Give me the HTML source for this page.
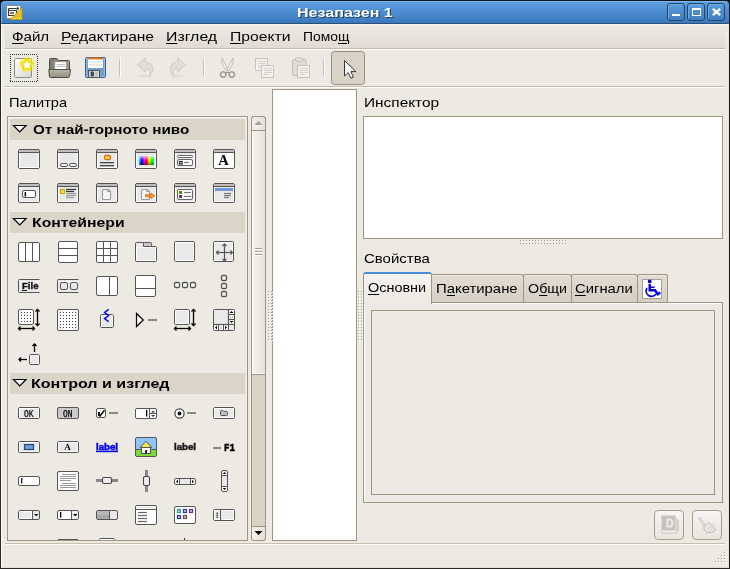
<!DOCTYPE html>
<html><head><meta charset="utf-8">
<style>
*{box-sizing:border-box}
html,body{margin:0;padding:0}
body{width:730px;height:569px;overflow:hidden;position:relative;background:#2B2824;font-family:"Liberation Sans",sans-serif;font-size:13px;color:#000}
.a{position:absolute}
#client{left:1px;top:24px;width:728px;height:544px;background:#EDE9E3;border-left:1px solid #fff;border-top:1px solid #f6f2ee}
.txt{white-space:nowrap;line-height:1;will-change:transform}
.u{text-decoration:underline;text-underline-offset:2px}
.bd{border:1px solid #A0957F}
svg{position:absolute;overflow:visible}
</style></head><body>
<!-- title bar --><div class="a" style="left:0;top:0;width:730px;height:24px;background:#161616"></div>
<div class="a" style="left:1px;top:1px;width:728px;height:23px;border-radius:4px 4px 0 0;background:linear-gradient(#5E9EDE,#3A79BE);border-top:1px solid #7BB5EF;border-left:1px solid #78B2EC;border-bottom:1px solid #2B5078"></div>
<div class="a txt" id="t_title" style="left:296.71px;top:6px;font-size:13.5px;transform:scaleX(1.1885);transform-origin:0 0;font-weight:bold;color:#fff;text-shadow:1px 1px 0 #24466b;">Незапазен 1</div>
<!-- title buttons -->
<div class="a" style="left:667px;top:3px;width:18px;height:18px;border:1px solid #23456C;border-radius:3px;background:linear-gradient(#5E9DDB,#3F7DC0);box-shadow:inset 1px 1px 0 #6FAAE6"></div>
<div class="a" style="left:672px;top:14px;width:8px;height:2px;background:#fff"></div>
<div class="a" style="left:687px;top:3px;width:18px;height:18px;border:1px solid #23456C;border-radius:3px;background:linear-gradient(#5E9DDB,#3F7DC0);box-shadow:inset 1px 1px 0 #6FAAE6"></div>
<div class="a" style="left:692px;top:8px;width:9px;height:8px;border:1px solid #fff;border-top-width:2px"></div>
<div class="a" style="left:707px;top:3px;width:18px;height:18px;border:1px solid #23456C;border-radius:3px;background:linear-gradient(#5E9DDB,#3F7DC0);box-shadow:inset 1px 1px 0 #6FAAE6"></div>
<svg style="left:711px;top:7px" width="11" height="10"><path d="M1.8 1.8L9.2 8.2M9.2 1.8L1.8 8.2" stroke="#fff" stroke-width="2.3"/></svg>

<!-- client -->
<div id="client" class="a"></div>
<!-- menubar -->
<div class="a" style="left:5px;top:25px;width:720px;height:24px;background:linear-gradient(#EDEAE5,#E1DBD3);border-bottom:1px solid #C5B9A7"></div>
<div class="a" style="left:5px;top:49px;width:720px;height:1px;background:#fff"></div>
<div class="a txt" id="t_m1" style="left:12.08px;top:30px;font-size:13.5px;transform:scaleX(1.12);transform-origin:0 0;"><span class="u">Ф</span>айл</div>
<div class="a txt" id="t_m2" style="left:61.05px;top:30px;font-size:13.5px;transform:scaleX(1.1513);transform-origin:0 0;"><span class="u">Р</span>едактиране</div>
<div class="a txt" id="t_m3" style="left:166.12px;top:30px;font-size:13.5px;transform:scaleX(1.1756);transform-origin:0 0;"><span class="u">И</span>зглед</div>
<div class="a txt" id="t_m4" style="left:230.03px;top:30px;font-size:13.5px;transform:scaleX(1.1653);transform-origin:0 0;"><span class="u">П</span>роекти</div>
<div class="a txt" id="t_m5" style="left:302.77px;top:30px;font-size:13.5px;transform:scaleX(1.0279);transform-origin:0 0;">Помо<span class="u">щ</span></div>

<!-- toolbar bottom line -->
<div class="a" style="left:5px;top:86px;width:720px;height:1px;background:#C9BEAE"></div>
<div class="a" style="left:5px;top:87px;width:720px;height:1px;background:#fff"></div>


<!-- palette label -->
<div class="a txt" id="t_pal" style="left:8.52px;top:96px;font-size:13.5px;transform:scaleX(1.0788);transform-origin:0 0;">Палитра</div>
<!-- palette frame -->
<div class="a" style="left:7px;top:116px;width:241px;height:425px;border:1px solid #A0957F;background:#EDE9E3"></div>
<div class="a" style="left:8px;top:117px;width:239px;height:1px;background:#F7F5F2"></div>
<!-- section headers -->
<div class="a" style="left:10px;top:119px;width:235px;height:21px;background:#DAD4C9"></div>
<div class="a" style="left:10px;top:212px;width:235px;height:21px;background:#DAD4C9"></div>
<div class="a" style="left:10px;top:373px;width:235px;height:21px;background:#DAD4C9"></div>
<svg style="left:13px;top:125px" width="14" height="8"><path d="M0.5 0.5H13L6.75 6.8Z" fill="#fff" stroke="#000" stroke-width="1.2"/></svg>
<svg style="left:13px;top:218px" width="14" height="8"><path d="M0.5 0.5H13L6.75 6.8Z" fill="#fff" stroke="#000" stroke-width="1.2"/></svg>
<svg style="left:13px;top:379px" width="14" height="8"><path d="M0.5 0.5H13L6.75 6.8Z" fill="#fff" stroke="#000" stroke-width="1.2"/></svg>
<div class="a txt" id="t_h1" style="left:32.7px;top:123px;font-size:13.5px;transform:scaleX(1.1277);transform-origin:0 0;font-weight:bold;">От най-горното ниво</div>
<div class="a txt" id="t_h2" style="left:31.53px;top:216px;font-size:13.5px;transform:scaleX(1.1688);transform-origin:0 0;font-weight:bold;">Контейнери</div>
<div class="a txt" id="t_h3" style="left:31.31px;top:377px;font-size:13.5px;transform:scaleX(1.1887);transform-origin:0 0;font-weight:bold;">Контрол и изглед</div>

<!-- scrollbar -->
<div class="a" style="left:251px;top:116px;width:15px;height:425px;background:#D9D2C7;border:1px solid #A0957F;border-radius:3px"></div>
<div class="a" style="left:251px;top:116px;width:15px;height:15px;background:linear-gradient(90deg,#F4F1ED,#E6E0D8);border:1px solid #A0957F;border-radius:3px 3px 0 0"></div>
<svg style="left:254px;top:120px" width="9" height="7"><path d="M0.5 5H8.5L4.5 1Z" fill="#A9A08F"/><path d="M1 6H8" stroke="#fff" stroke-width="1"/></svg>
<div class="a" style="left:251px;top:130px;width:15px;height:245px;background:linear-gradient(90deg,#F7F5F2,#E6E1DA);border:1px solid #A0957F;box-shadow:inset 1px -1px 0 #fff"></div>
<div class="a" style="left:255px;top:248px;width:7px;height:1px;background:#A89E8C;box-shadow:0 1px 0 #fff,0 3px 0 #A89E8C,0 4px 0 #fff,0 6px 0 #A89E8C,0 7px 0 #fff"></div>
<div class="a" style="left:251px;top:526px;width:15px;height:15px;background:linear-gradient(90deg,#F4F1ED,#E6E0D8);border:1px solid #A0957F;border-radius:0 0 3px 3px"></div>
<svg style="left:254px;top:530px" width="9" height="7"><path d="M0.5 1H8.5L4.5 5Z" fill="#000"/></svg>

<!-- design white panel -->
<div class="a" style="left:272px;top:89px;width:85px;height:452px;background:#fff;border:1px solid #A0957F"></div>

<!-- inspector -->
<div class="a txt" id="t_insp" style="left:364.36px;top:96px;font-size:13.5px;transform:scaleX(1.1413);transform-origin:0 0;">Инспектор</div>
<div class="a" style="left:363px;top:116px;width:360px;height:123px;background:#fff;border:1px solid #A0957F"></div>

<!-- properties -->
<div class="a txt" id="t_prop" style="left:364.39px;top:252px;font-size:13.5px;transform:scaleX(1.1105);transform-origin:0 0;">Свойства</div>
<!-- notebook -->
<div class="a" style="left:363px;top:302px;width:360px;height:201px;border:1px solid #A0957F;box-shadow:inset 1px 1px 0 #fff"></div>
<div class="a" style="left:371px;top:310px;width:344px;height:185px;border:1px solid #A0957F"></div>
<!-- tabs -->
<div class="a" style="left:432px;top:274px;width:92px;height:28px;background:linear-gradient(#E2DCD3,#D6CFC4);border:1px solid #A0957F;border-bottom:none;border-left:none;border-radius:0 3px 0 0;box-shadow:inset 0 1px 0 #EEE9E3"></div>
<div class="a" style="left:523px;top:274px;width:49px;height:28px;background:linear-gradient(#E2DCD3,#D6CFC4);box-shadow:inset 0 1px 0 #EEE9E3;border:1px solid #A0957F;border-bottom:none;border-radius:3px 3px 0 0"></div>
<div class="a" style="left:571px;top:274px;width:67px;height:28px;background:linear-gradient(#E2DCD3,#D6CFC4);box-shadow:inset 0 1px 0 #EEE9E3;border:1px solid #A0957F;border-bottom:none;border-radius:3px 3px 0 0"></div>
<div class="a" style="left:637px;top:274px;width:31px;height:28px;background:linear-gradient(#E2DCD3,#D6CFC4);box-shadow:inset 0 1px 0 #EEE9E3;border:1px solid #A0957F;border-bottom:none;border-radius:3px 3px 0 0"></div>
<div class="a" style="left:363px;top:272px;width:69px;height:32px;background:linear-gradient(#F6F4F1,#EDE9E3);border:1px solid #A0957F;border-top:2px solid #4A8CD6;border-bottom:none;border-radius:3px 3px 0 0"></div>
<div class="a txt" id="t_tab1" style="left:368.43px;top:281px;font-size:13.5px;transform:scaleX(1.0673);transform-origin:0 0;"><span class="u">О</span>сновни</div>
<div class="a txt" id="t_tab2" style="left:435.9px;top:282px;font-size:13.5px;transform:scaleX(1.1028);transform-origin:0 0;">П<span class="u">а</span>кетиране</div>
<div class="a txt" id="t_tab3" style="left:527.64px;top:282px;font-size:13.5px;transform:scaleX(1.0588);transform-origin:0 0;">О<span class="u">б</span>щи</div>
<div class="a txt" id="t_tab4" style="left:575.0px;top:282px;font-size:13.5px;transform:scaleX(1.098);transform-origin:0 0;"><span class="u">С</span>игнали</div>

<!-- bottom buttons -->
<div class="a" style="left:654px;top:510px;width:30px;height:30px;border:1px solid #A89E8C;border-radius:4px;background:linear-gradient(#F7F5F3,#E8E4DE)"></div>
<div class="a" style="left:692px;top:510px;width:30px;height:30px;border:1px solid #A89E8C;border-radius:4px;background:linear-gradient(#F7F5F3,#E8E4DE)"></div>

<!-- statusbar -->
<div class="a" style="left:5px;top:543px;width:720px;height:1px;background:#C9BEAE"></div>
<div class="a" style="left:5px;top:544px;width:720px;height:1px;background:#fff"></div>
<div class="a" style="left:2px;top:567px;width:726px;height:1px;background:#E6DED3"></div><div class="a" style="left:728px;top:25px;width:1px;height:543px;background:#E6DFD5"></div>
<!--PALETTE--><svg class="a" style="left:0;top:0" width="730" height="569" viewBox="0 0 730 569"><rect x="18.5" y="149.5" width="21" height="19" fill="#E9E9E9" stroke="#555" stroke-width="1" rx="1.5"/><path d="M19.5,153 V167.5 H38.5 V153" fill="none" stroke="#fff" stroke-width="1"/><rect x="19" y="150" width="20" height="2" fill="#BDBDBD"/><line x1="19" y1="152.5" x2="39" y2="152.5" stroke="#555" stroke-width="1"/><rect x="57.5" y="149.5" width="21" height="19" fill="#E9E9E9" stroke="#555" stroke-width="1" rx="1.5"/><path d="M58.5,153 V167.5 H77.5 V153" fill="none" stroke="#fff" stroke-width="1"/><rect x="58" y="150" width="20" height="2" fill="#BDBDBD"/><line x1="58" y1="152.5" x2="78" y2="152.5" stroke="#555" stroke-width="1"/><rect x="60.5" y="163.5" width="7" height="3" fill="#fff" stroke="#555" stroke-width="1" rx="1.5"/><rect x="69.5" y="163.5" width="7" height="3" fill="#fff" stroke="#555" stroke-width="1" rx="1.5"/><rect x="96.5" y="149.5" width="21" height="19" fill="#E9E9E9" stroke="#555" stroke-width="1" rx="1.5"/><path d="M97.5,153 V167.5 H116.5 V153" fill="none" stroke="#fff" stroke-width="1"/><rect x="97" y="150" width="20" height="2" fill="#BDBDBD"/><line x1="97" y1="152.5" x2="117" y2="152.5" stroke="#555" stroke-width="1"/><rect x="104.5" y="155.5" width="6" height="4" fill="#FCE94F" stroke="#E0650A" stroke-width="1.3" rx="1.5"/><rect x="100" y="162" width="14" height="1.3" fill="#444"/><rect x="100" y="165" width="14" height="1.3" fill="#444"/><rect x="135.5" y="149.5" width="21" height="19" fill="#E9E9E9" stroke="#555" stroke-width="1" rx="1.5"/><path d="M136.5,153 V167.5 H155.5 V153" fill="none" stroke="#fff" stroke-width="1"/><rect x="136" y="150" width="20" height="2" fill="#BDBDBD"/><line x1="136" y1="152.5" x2="156" y2="152.5" stroke="#555" stroke-width="1"/><defs><linearGradient id="spec" x1="0" x2="1" y1="0" y2="0"><stop offset="0" stop-color="#0ff"/><stop offset="0.18" stop-color="#00f"/><stop offset="0.38" stop-color="#f0f"/><stop offset="0.52" stop-color="#f00"/><stop offset="0.68" stop-color="#ff0"/><stop offset="0.85" stop-color="#0f0"/><stop offset="1" stop-color="#0f8"/></linearGradient><linearGradient id="specv" x1="0" x2="0" y1="0" y2="1"><stop offset="0" stop-color="#fff" stop-opacity="0.75"/><stop offset="0.45" stop-color="#fff" stop-opacity="0"/><stop offset="0.55" stop-color="#000" stop-opacity="0"/><stop offset="1" stop-color="#000" stop-opacity="0.45"/></linearGradient><linearGradient id="pg" x1="0" y1="0" x2="1" y2="1"><stop offset="0" stop-color="#fff"/><stop offset="1" stop-color="#D0D0D0"/></linearGradient><radialGradient id="glow"><stop offset="0.5" stop-color="#FFF200" stop-opacity="0.9"/><stop offset="1" stop-color="#FFF200" stop-opacity="0"/></radialGradient></defs><rect x="139" y="156" width="15" height="9" fill="url(#spec)"/><rect x="139" y="156" width="15" height="9" fill="url(#specv)"/><rect x="174.5" y="149.5" width="21" height="19" fill="#E9E9E9" stroke="#555" stroke-width="1" rx="1.5"/><path d="M175.5,153 V167.5 H194.5 V153" fill="none" stroke="#fff" stroke-width="1"/><rect x="175" y="150" width="20" height="2" fill="#BDBDBD"/><line x1="175" y1="152.5" x2="195" y2="152.5" stroke="#555" stroke-width="1"/><rect x="177.5" y="155.5" width="15" height="2" fill="#fff" stroke="#666" stroke-width="1" rx="1"/><rect x="177.5" y="159.5" width="15" height="6" fill="#fff" stroke="#666" stroke-width="1" rx="1.5"/><rect x="179.5" y="161.5" width="2.5" height="2.5" fill="none" stroke="#333" stroke-width="1.3"/><line x1="184" y1="162.5" x2="189" y2="162.5" stroke="#777" stroke-width="1.2"/><rect x="213.5" y="149.5" width="21" height="19" fill="#fff" stroke="#555" stroke-width="1" rx="1.5"/><rect x="214" y="150" width="20" height="2" fill="#BDBDBD"/><line x1="214" y1="152.5" x2="234" y2="152.5" stroke="#555" stroke-width="1"/><text x="223.5" y="165" font-family="Liberation Serif" font-weight="bold" font-size="14.5" text-anchor="middle" fill="#000">A</text><rect x="18.5" y="183.5" width="21" height="19" fill="#E9E9E9" stroke="#555" stroke-width="1" rx="1.5"/><path d="M19.5,187 V201.5 H38.5 V187" fill="none" stroke="#fff" stroke-width="1"/><rect x="19" y="184" width="20" height="2" fill="#BDBDBD"/><line x1="19" y1="186.5" x2="39" y2="186.5" stroke="#555" stroke-width="1"/><rect x="22.5" y="190.5" width="13" height="7" fill="#fff" stroke="#555" stroke-width="1" rx="1.5"/><rect x="24.6" y="192" width="1.5" height="4.5" fill="#000"/><rect x="57.5" y="183.5" width="21" height="19" fill="#E9E9E9" stroke="#555" stroke-width="1" rx="1.5"/><path d="M58.5,187 V201.5 H77.5 V187" fill="none" stroke="#fff" stroke-width="1"/><rect x="58" y="184" width="20" height="2" fill="#BDBDBD"/><line x1="58" y1="186.5" x2="78" y2="186.5" stroke="#555" stroke-width="1"/><rect x="60.5" y="189.5" width="4" height="4" fill="#F3DE3C" stroke="#C4A000" stroke-width="1.2" rx="0.8"/><line x1="66" y1="189.5" x2="76" y2="189.5" stroke="#333" stroke-width="1.2"/><line x1="66" y1="191.5" x2="74" y2="191.5" stroke="#333" stroke-width="1.2"/><line x1="66" y1="193.5" x2="76" y2="193.5" stroke="#999" stroke-width="1.2"/><line x1="66" y1="195.5" x2="76" y2="195.5" stroke="#999" stroke-width="1.2"/><line x1="66" y1="197.5" x2="74" y2="197.5" stroke="#999" stroke-width="1.2"/><rect x="96.5" y="183.5" width="21" height="19" fill="#E9E9E9" stroke="#555" stroke-width="1" rx="1.5"/><path d="M97.5,187 V201.5 H116.5 V187" fill="none" stroke="#fff" stroke-width="1"/><rect x="97" y="184" width="20" height="2" fill="#BDBDBD"/><line x1="97" y1="186.5" x2="117" y2="186.5" stroke="#555" stroke-width="1"/><path d="M102.5,190.5 Q102.5,189.5 103.5,189.5 H108.5 L110.5,191.5 V198.5 Q110.5,199.5 109.5,199.5 H103.5 Q102.5,199.5 102.5,198.5 Z" fill="#F6F6F6" stroke="#9a9a9a" stroke-width="1.1"/><path d="M107.5,189.5 V191.5 H110.5" fill="none" stroke="#9a9a9a" stroke-width="0.9"/><rect x="135.5" y="183.5" width="21" height="19" fill="#E9E9E9" stroke="#555" stroke-width="1" rx="1.5"/><path d="M136.5,187 V201.5 H155.5 V187" fill="none" stroke="#fff" stroke-width="1"/><rect x="136" y="184" width="20" height="2" fill="#BDBDBD"/><line x1="136" y1="186.5" x2="156" y2="186.5" stroke="#555" stroke-width="1"/><path d="M141.5,190.5 Q141.5,189.5 142.5,189.5 H147.5 L149.5,191.5 V198.5 Q149.5,199.5 148.5,199.5 H142.5 Q141.5,199.5 141.5,198.5 Z" fill="#F6F6F6" stroke="#9a9a9a" stroke-width="1.1"/><path d="M146.5,189.5 V191.5 H149.5" fill="none" stroke="#9a9a9a" stroke-width="0.9"/><path d="M145.5,194.8 H151 V193.2 L154.8,195.8 L151,198.4 V196.8 H145.5 Z" fill="#F9A845" stroke="#D4650A" stroke-width="0.9"/><rect x="174.5" y="183.5" width="21" height="19" fill="#E9E9E9" stroke="#555" stroke-width="1" rx="1.5"/><path d="M175.5,187 V201.5 H194.5 V187" fill="none" stroke="#fff" stroke-width="1"/><rect x="175" y="184" width="20" height="2" fill="#BDBDBD"/><line x1="175" y1="186.5" x2="195" y2="186.5" stroke="#555" stroke-width="1"/><rect x="177.5" y="189.5" width="15" height="10" fill="#fff" stroke="#666" stroke-width="1" rx="1.5"/><rect x="179" y="191" width="3" height="3" fill="#4E9A06"/><rect x="179" y="195" width="3" height="3" fill="#5C3566"/><line x1="184" y1="192.5" x2="191" y2="192.5" stroke="#777" stroke-width="1.2"/><line x1="184" y1="196.5" x2="191" y2="196.5" stroke="#777" stroke-width="1.2"/><rect x="213.5" y="183.5" width="21" height="19" fill="#E9E9E9" stroke="#555" stroke-width="1" rx="1.5"/><path d="M214.5,187 V201.5 H233.5 V187" fill="none" stroke="#fff" stroke-width="1"/><rect x="214" y="184" width="20" height="2" fill="#BDBDBD"/><line x1="214" y1="186.5" x2="234" y2="186.5" stroke="#555" stroke-width="1"/><rect x="215" y="188" width="18" height="3" fill="#6B9BD2"/><line x1="224" y1="193.5" x2="231" y2="193.5" stroke="#777" stroke-width="1.2"/><line x1="224" y1="195.5" x2="231" y2="195.5" stroke="#777" stroke-width="1.2"/><line x1="224" y1="197.5" x2="229" y2="197.5" stroke="#777" stroke-width="1.2"/><rect x="18.5" y="242.5" width="21" height="19" fill="#fff" stroke="#555" stroke-width="1" rx="1.5"/><line x1="25.5" y1="242.5" x2="25.5" y2="261.5" stroke="#555" stroke-width="1"/><line x1="32.5" y1="242.5" x2="32.5" y2="261.5" stroke="#555" stroke-width="1"/><rect x="58.5" y="241.5" width="19" height="21" fill="#fff" stroke="#555" stroke-width="1" rx="1.5"/><line x1="58.5" y1="248.5" x2="77.5" y2="248.5" stroke="#555" stroke-width="1"/><line x1="58.5" y1="255.5" x2="77.5" y2="255.5" stroke="#555" stroke-width="1"/><rect x="96.5" y="241.5" width="21" height="21" fill="#fff" stroke="#555" stroke-width="1" rx="1.5"/><line x1="103.5" y1="241.5" x2="103.5" y2="262.5" stroke="#555" stroke-width="1"/><line x1="110.5" y1="241.5" x2="110.5" y2="262.5" stroke="#555" stroke-width="1"/><line x1="96.5" y1="248.5" x2="117.5" y2="248.5" stroke="#555" stroke-width="1"/><line x1="96.5" y1="255.5" x2="117.5" y2="255.5" stroke="#555" stroke-width="1"/><path d="M135.5,260.5 V243.5 Q135.5,242.5 136.5,242.5 H143.5 V246.5 H155.5 Q156.5,246.5 156.5,247.5 V260.5 Q156.5,261.5 155.5,261.5 H136.5 Q135.5,261.5 135.5,260.5 Z" fill="#E9E9E9" stroke="#555" stroke-width="1"/><rect x="136.5" y="247.5" width="19" height="13" fill="none" stroke="#fff" stroke-width="1"/><rect x="143.5" y="242.5" width="8" height="4" fill="#C8C8C8" stroke="#555" stroke-width="1" rx="1"/><rect x="174.5" y="241.5" width="20" height="20" fill="#E9E9E9" stroke="#555" stroke-width="1" rx="1.5"/><rect x="175.5" y="242.5" width="18" height="18" fill="none" stroke="#fff" stroke-width="1"/><rect x="213.5" y="241.5" width="20" height="20" fill="#E9E9E9" stroke="#555" stroke-width="1" rx="1.5"/><rect x="214.5" y="242.5" width="18" height="18" fill="none" stroke="#fff" stroke-width="1"/><line x1="216" y1="252.5" x2="232" y2="252.5" stroke="#555" stroke-width="1.2"/><line x1="224.5" y1="244" x2="224.5" y2="260" stroke="#555" stroke-width="1.2"/><path d="M218.5,250.5 L216.5,252.5 L218.5,254.5 M230.5,250.5 L232.5,252.5 L230.5,254.5 M222.5,246 L224.5,244 L226.5,246 M222.5,259 L224.5,261 L226.5,259" fill="none" stroke="#555" stroke-width="1.2"/><path d="M39.5,279.5 H19.5 Q18.5,279.5 18.5,280.5 V291.5 Q18.5,292.5 19.5,292.5 H39.5" fill="#E9E9E9" stroke="#555" stroke-width="1"/><rect x="19" y="281" width="20" height="1" fill="#fff"/><text x="22" y="289" font-family="Liberation Sans" font-weight="bold" font-size="9.5" fill="#111" stroke="#111" stroke-width="0.35" textLength="16.5" lengthAdjust="spacingAndGlyphs">File</text><line x1="22" y1="290.5" x2="27" y2="290.5" stroke="#111" stroke-width="1"/><path d="M78.5,279.5 H58.5 Q57.5,279.5 57.5,280.5 V291.5 Q57.5,292.5 58.5,292.5 H78.5" fill="#E9E9E9" stroke="#555" stroke-width="1"/><rect x="58" y="281" width="20" height="1" fill="#fff"/><rect x="60.5" y="282.5" width="7" height="7" fill="#E9E9E9" stroke="#555" stroke-width="1" rx="1.5"/><rect x="70.5" y="282.5" width="7" height="7" fill="#E9E9E9" stroke="#555" stroke-width="1" rx="1.5"/><rect x="96.5" y="276.5" width="21" height="19" fill="#fff" stroke="#555" stroke-width="1" rx="1.5"/><line x1="109.5" y1="276.5" x2="109.5" y2="295.5" stroke="#555" stroke-width="1"/><rect x="135.5" y="275.5" width="20" height="21" fill="#fff" stroke="#555" stroke-width="1" rx="1.5"/><line x1="135.5" y1="288.5" x2="155.5" y2="288.5" stroke="#555" stroke-width="1"/><rect x="174.5" y="282.5" width="5" height="5" fill="#fff" stroke="#555" stroke-width="1.3" rx="1.3"/><rect x="182.5" y="282.5" width="5" height="5" fill="#fff" stroke="#555" stroke-width="1.3" rx="1.3"/><rect x="190.5" y="282.5" width="5" height="5" fill="#fff" stroke="#555" stroke-width="1.3" rx="1.3"/><rect x="221.5" y="275.5" width="5" height="5" fill="#fff" stroke="#555" stroke-width="1.3" rx="1.3"/><rect x="221.5" y="283.5" width="5" height="5" fill="#fff" stroke="#555" stroke-width="1.3" rx="1.3"/><rect x="221.5" y="291.5" width="5" height="5" fill="#fff" stroke="#555" stroke-width="1.3" rx="1.3"/><rect x="18.5" y="309.5" width="15" height="15" fill="#fff" stroke="#555" stroke-width="1" rx="1.5"/><rect x="21" y="312" width="1" height="1" fill="#444"/><rect x="21" y="315" width="1" height="1" fill="#444"/><rect x="21" y="318" width="1" height="1" fill="#444"/><rect x="21" y="321" width="1" height="1" fill="#444"/><rect x="24" y="312" width="1" height="1" fill="#444"/><rect x="24" y="315" width="1" height="1" fill="#444"/><rect x="24" y="318" width="1" height="1" fill="#444"/><rect x="24" y="321" width="1" height="1" fill="#444"/><rect x="27" y="312" width="1" height="1" fill="#444"/><rect x="27" y="315" width="1" height="1" fill="#444"/><rect x="27" y="318" width="1" height="1" fill="#444"/><rect x="27" y="321" width="1" height="1" fill="#444"/><rect x="30" y="312" width="1" height="1" fill="#444"/><rect x="30" y="315" width="1" height="1" fill="#444"/><rect x="30" y="318" width="1" height="1" fill="#444"/><rect x="30" y="321" width="1" height="1" fill="#444"/><line x1="37.5" y1="309.5" x2="37.5" y2="325.5" stroke="#000" stroke-width="1.3"/><path d="M35.5,311.5 L37.5,309.5 L39.5,311.5 M35.5,323.5 L37.5,325.5 L39.5,323.5" fill="none" stroke="#000" stroke-width="1.3"/><line x1="18.5" y1="328.5" x2="34.5" y2="328.5" stroke="#000" stroke-width="1.3"/><path d="M20.5,326.5 L18.5,328.5 L20.5,330.5 M32.5,326.5 L34.5,328.5 L32.5,330.5" fill="none" stroke="#000" stroke-width="1.3"/><rect x="57.5" y="309.5" width="21" height="21" fill="#fff" stroke="#555" stroke-width="1" rx="1.5"/><rect x="60" y="312" width="1" height="1" fill="#444"/><rect x="60" y="315" width="1" height="1" fill="#444"/><rect x="60" y="318" width="1" height="1" fill="#444"/><rect x="60" y="321" width="1" height="1" fill="#444"/><rect x="60" y="324" width="1" height="1" fill="#444"/><rect x="60" y="327" width="1" height="1" fill="#444"/><rect x="63" y="312" width="1" height="1" fill="#444"/><rect x="63" y="315" width="1" height="1" fill="#444"/><rect x="63" y="318" width="1" height="1" fill="#444"/><rect x="63" y="321" width="1" height="1" fill="#444"/><rect x="63" y="324" width="1" height="1" fill="#444"/><rect x="63" y="327" width="1" height="1" fill="#444"/><rect x="66" y="312" width="1" height="1" fill="#444"/><rect x="66" y="315" width="1" height="1" fill="#444"/><rect x="66" y="318" width="1" height="1" fill="#444"/><rect x="66" y="321" width="1" height="1" fill="#444"/><rect x="66" y="324" width="1" height="1" fill="#444"/><rect x="66" y="327" width="1" height="1" fill="#444"/><rect x="69" y="312" width="1" height="1" fill="#444"/><rect x="69" y="315" width="1" height="1" fill="#444"/><rect x="69" y="318" width="1" height="1" fill="#444"/><rect x="69" y="321" width="1" height="1" fill="#444"/><rect x="69" y="324" width="1" height="1" fill="#444"/><rect x="69" y="327" width="1" height="1" fill="#444"/><rect x="72" y="312" width="1" height="1" fill="#444"/><rect x="72" y="315" width="1" height="1" fill="#444"/><rect x="72" y="318" width="1" height="1" fill="#444"/><rect x="72" y="321" width="1" height="1" fill="#444"/><rect x="72" y="324" width="1" height="1" fill="#444"/><rect x="72" y="327" width="1" height="1" fill="#444"/><rect x="75" y="312" width="1" height="1" fill="#444"/><rect x="75" y="315" width="1" height="1" fill="#444"/><rect x="75" y="318" width="1" height="1" fill="#444"/><rect x="75" y="321" width="1" height="1" fill="#444"/><rect x="75" y="324" width="1" height="1" fill="#444"/><rect x="75" y="327" width="1" height="1" fill="#444"/><rect x="100.5" y="314.5" width="13" height="13" fill="#E9E9E9" stroke="#555" stroke-width="1" rx="1.5"/><rect x="101.5" y="315.5" width="11" height="11" fill="none" stroke="#fff" stroke-width="1"/><path d="M108.6,309.3 L104.6,312.5 L108.6,315.5 L104.6,318.5 L108.6,321.7" fill="none" stroke="#0000FF" stroke-width="1.5"/><path d="M136.5,313.5 V326.5 L143.2,320 Z" fill="#fff" stroke="#000" stroke-width="1.2"/><rect x="148" y="319" width="9" height="2" fill="#888"/><rect x="174.5" y="309.5" width="15" height="15" fill="#E9E9E9" stroke="#555" stroke-width="1" rx="1.5"/><rect x="175.5" y="310.5" width="13" height="13" fill="none" stroke="#fff" stroke-width="1"/><line x1="193.5" y1="309.5" x2="193.5" y2="325.5" stroke="#000" stroke-width="1.3"/><path d="M191.5,311.5 L193.5,309.5 L195.5,311.5 M191.5,323.5 L193.5,325.5 L195.5,323.5" fill="none" stroke="#000" stroke-width="1.3"/><line x1="174.5" y1="328.5" x2="190.5" y2="328.5" stroke="#000" stroke-width="1.3"/><path d="M176.5,326.5 L174.5,328.5 L176.5,330.5 M188.5,326.5 L190.5,328.5 L188.5,330.5" fill="none" stroke="#000" stroke-width="1.3"/><rect x="213.5" y="309.5" width="21" height="21" fill="#fff" stroke="#555" stroke-width="1" rx="1"/><rect x="214" y="310" width="14" height="14" fill="#E9E9E9"/><line x1="228.5" y1="309.5" x2="228.5" y2="330.5" stroke="#555" stroke-width="1.2"/><line x1="213.5" y1="324.5" x2="234.5" y2="324.5" stroke="#555" stroke-width="1.2"/><line x1="228.5" y1="314.5" x2="234.5" y2="314.5" stroke="#555" stroke-width="1"/><line x1="228.5" y1="319.5" x2="234.5" y2="319.5" stroke="#555" stroke-width="1"/><line x1="218.5" y1="324.5" x2="218.5" y2="330.5" stroke="#555" stroke-width="1"/><line x1="223.5" y1="324.5" x2="223.5" y2="330.5" stroke="#555" stroke-width="1"/><rect x="229.5" y="315.3" width="4" height="3.6" fill="#E6E6E6"/><rect x="219.5" y="326" width="3" height="3" fill="#E6E6E6"/><path d="M229.5,313 L231.5,311 L233.5,313 Z" fill="#000"/><path d="M229.5,321 L231.5,323 L233.5,321 Z" fill="#000"/><path d="M217,325.5 L215,327.5 L217,329.5 Z M225,325.5 L227,327.5 L225,329.5 Z" fill="#000"/><rect x="229" y="325" width="5" height="5" fill="#E9E9E9"/><rect x="29.5" y="354.5" width="10" height="10" fill="#E9E9E9" stroke="#555" stroke-width="1" rx="1.5"/><rect x="30.5" y="355.5" width="8" height="8" fill="none" stroke="#fff" stroke-width="1"/><line x1="34.5" y1="344" x2="34.5" y2="352" stroke="#000" stroke-width="1.3"/><path d="M32.5,346 L34.5,344 L36.5,346" fill="none" stroke="#000" stroke-width="1.3"/><line x1="19" y1="359.5" x2="27" y2="359.5" stroke="#000" stroke-width="1.3"/><path d="M21,357.5 L19,359.5 L21,361.5" fill="none" stroke="#000" stroke-width="1.3"/><rect x="18.5" y="407.5" width="21" height="11" fill="#E9E9E9" stroke="#555" stroke-width="1" rx="1.5"/><rect x="19.5" y="408.5" width="19" height="9" fill="none" stroke="#fff" stroke-width="1"/><text x="24" y="416.6" font-family="Liberation Mono" font-size="10" fill="#000" stroke="#000" stroke-width="0.25" textLength="9.5" lengthAdjust="spacingAndGlyphs">OK</text><rect x="57.5" y="407.5" width="21" height="11" fill="#CBCBCB" stroke="#555" stroke-width="1" rx="1.5"/><text x="63" y="416.6" font-family="Liberation Mono" font-size="10" fill="#000" stroke="#000" stroke-width="0.25" textLength="9.5" lengthAdjust="spacingAndGlyphs">ON</text><rect x="96.5" y="408.5" width="9" height="9" fill="#fff" stroke="#555" stroke-width="1" rx="1.5"/><path d="M98.4,412.2 L100,416 L104.5,410.3" fill="none" stroke="#111" stroke-width="1.5"/><rect x="98" y="412" width="2" height="4" fill="#111"/><rect x="109" y="412" width="9" height="2" fill="#888"/><rect x="135.5" y="408.5" width="21" height="10" fill="#fff" stroke="#555" stroke-width="1" rx="1.5"/><line x1="149.5" y1="408.5" x2="149.5" y2="418.5" stroke="#555" stroke-width="1"/><line x1="149.5" y1="413.5" x2="156.5" y2="413.5" stroke="#555" stroke-width="1"/><rect x="146" y="410" width="1.3" height="6.5" fill="#000"/><path d="M151,412.5 L153,410.5 L155,412.5 Z M151,415 L153,417 L155,415 Z" fill="#333"/><circle cx="179.5" cy="413.5" r="4.6" fill="#fff" stroke="#444" stroke-width="1.2"/><circle cx="179.5" cy="413.5" r="1.9" fill="#111"/><rect x="187" y="412" width="9" height="2" fill="#888"/><rect x="213.5" y="407.5" width="21" height="11" fill="#E9E9E9" stroke="#555" stroke-width="1" rx="1.5"/><rect x="214.5" y="408.5" width="19" height="9" fill="none" stroke="#fff" stroke-width="1"/><path d="M220.5,411.5 Q220.5,410.5 221.5,410.5 H223 L224,411.5 H226.5 Q227.5,411.5 227.5,412.5 V414.5 Q227.5,415.5 226.5,415.5 H221.5 Q220.5,415.5 220.5,414.5 Z" fill="#BDBDBD" stroke="#555" stroke-width="1"/><rect x="18.5" y="441.5" width="21" height="11" fill="#E9E9E9" stroke="#555" stroke-width="1" rx="1.5"/><rect x="19.5" y="442.5" width="19" height="9" fill="none" stroke="#fff" stroke-width="1"/><rect x="24.5" y="444.5" width="9" height="5" fill="#729FCF" stroke="#204A87" stroke-width="1.2"/><rect x="57.5" y="441.5" width="21" height="11" fill="#E9E9E9" stroke="#555" stroke-width="1" rx="1.5"/><rect x="58.5" y="442.5" width="19" height="9" fill="none" stroke="#fff" stroke-width="1"/><text x="67.5" y="450.3" font-family="Liberation Serif" font-weight="bold" font-size="9" text-anchor="middle" fill="#000">A</text><text x="96" y="450" font-family="Liberation Sans" font-weight="bold" font-size="9.6" fill="#0000EE" stroke="#0000EE" stroke-width="0.5" textLength="22" lengthAdjust="spacingAndGlyphs">label</text><rect x="96" y="450.6" width="22" height="1.6" fill="#0000EE"/><rect x="135.5" y="437.5" width="21" height="19" fill="#8DC4F9" stroke="#555" stroke-width="1" rx="1.5"/><path d="M136,449 H156 V455.5 Q156,456 155.5,456 H136.5 Q136,456 136,455.5 Z" fill="#7BD93A"/><line x1="136" y1="449.5" x2="156" y2="449.5" stroke="#555" stroke-width="1"/><path d="M140.2,447.5 L146,441.3 L151.8,447.5 Z" fill="#FCE94F" stroke="#555" stroke-width="1"/><rect x="141.5" y="447.5" width="9" height="6" fill="#fff" stroke="#555" stroke-width="1"/><rect x="145" y="450" width="2" height="4" fill="#333"/><text x="174" y="450" font-family="Liberation Sans" font-weight="bold" font-size="9.6" fill="#1a1a1a" stroke="#1a1a1a" stroke-width="0.5" textLength="22" lengthAdjust="spacingAndGlyphs">label</text><rect x="213" y="447" width="8" height="2" fill="#888"/><text x="224" y="451" font-family="Liberation Mono" font-weight="bold" font-size="11" fill="#000" stroke="#000" stroke-width="0.5" textLength="11" lengthAdjust="spacingAndGlyphs">F1</text><rect x="18.5" y="476.5" width="21" height="9" fill="#fff" stroke="#555" stroke-width="1" rx="1.5"/><rect x="21" y="478" width="1.3" height="5.5" fill="#1a1a1a"/><rect x="57.5" y="471.5" width="21" height="19" fill="#fff" stroke="#555" stroke-width="1" rx="1.5"/><line x1="62" y1="474.5" x2="76" y2="474.5" stroke="#9a9a9a" stroke-width="1"/><line x1="60" y1="476.5" x2="76" y2="476.5" stroke="#9a9a9a" stroke-width="1"/><line x1="60" y1="478.5" x2="76" y2="478.5" stroke="#9a9a9a" stroke-width="1"/><line x1="60" y1="480.5" x2="71" y2="480.5" stroke="#9a9a9a" stroke-width="1"/><line x1="62" y1="483.5" x2="76" y2="483.5" stroke="#9a9a9a" stroke-width="1"/><line x1="60" y1="485.5" x2="76" y2="485.5" stroke="#9a9a9a" stroke-width="1"/><line x1="60" y1="487.5" x2="76" y2="487.5" stroke="#9a9a9a" stroke-width="1"/><rect x="96" y="479" width="22" height="3" fill="#888"/><rect x="102.5" y="477.5" width="9" height="6" fill="#EEE" stroke="#444" stroke-width="1.1" rx="1.5"/><rect x="145" y="470" width="3" height="22" fill="#888"/><rect x="143.5" y="476.5" width="6" height="9" fill="#EEE" stroke="#444" stroke-width="1.1" rx="1.5"/><rect x="174.5" y="478.5" width="21" height="6" fill="#fff" stroke="#555" stroke-width="1" rx="1.5"/><rect x="180" y="479" width="10" height="5" fill="#E9E9E9"/><line x1="179.5" y1="478.5" x2="179.5" y2="484.5" stroke="#555" stroke-width="1"/><line x1="190.5" y1="478.5" x2="190.5" y2="484.5" stroke="#555" stroke-width="1"/><path d="M178,479.8 L176,481.5 L178,483.2 Z M192,479.8 L194,481.5 L192,483.2 Z" fill="#000"/><rect x="221.5" y="470.5" width="6" height="21" fill="#fff" stroke="#555" stroke-width="1" rx="1.5"/><rect x="222" y="476" width="5" height="10" fill="#E9E9E9"/><line x1="221.5" y1="475.5" x2="227.5" y2="475.5" stroke="#555" stroke-width="1"/><line x1="221.5" y1="486.5" x2="227.5" y2="486.5" stroke="#555" stroke-width="1"/><path d="M222.8,474 L224.5,472 L226.2,474 Z M222.8,488 L224.5,490 L226.2,488 Z" fill="#000"/><rect x="18.5" y="510.5" width="21" height="9" fill="#E9E9E9" stroke="#555" stroke-width="1" rx="1.5"/><rect x="19.5" y="511.5" width="12" height="7" fill="none" stroke="#fff" stroke-width="1"/><line x1="32.5" y1="510.5" x2="32.5" y2="519.5" stroke="#555" stroke-width="1"/><path d="M34,514 H38.5 L36.25,516.3 Z" fill="#000"/><rect x="57.5" y="510.5" width="21" height="9" fill="#fff" stroke="#555" stroke-width="1" rx="1.5"/><line x1="71.5" y1="510.5" x2="71.5" y2="519.5" stroke="#555" stroke-width="1"/><rect x="72" y="511" width="6" height="8" fill="#EDEDED"/><rect x="60" y="512" width="1.3" height="5.5" fill="#000"/><path d="M73,514 H77.5 L75.25,516.3 Z" fill="#000"/><rect x="96.5" y="510.5" width="21" height="9" fill="#E9E9E9" stroke="#555" stroke-width="1" rx="1.5"/><rect x="97" y="511" width="12.5" height="4" fill="#B8B8B8"/><rect x="97" y="515" width="12.5" height="4" fill="#A8A8A8"/><line x1="109.5" y1="510.5" x2="109.5" y2="519.5" stroke="#555" stroke-width="1"/><rect x="135.5" y="505.5" width="21" height="19" fill="#fff" stroke="#555" stroke-width="1" rx="1.5"/><line x1="135.5" y1="509.5" x2="156.5" y2="509.5" stroke="#555" stroke-width="1"/><rect x="137" y="507" width="18" height="1" fill="#E6E6E6"/><line x1="138" y1="512.5" x2="147" y2="512.5" stroke="#666" stroke-width="1.2"/><line x1="138" y1="515.5" x2="147" y2="515.5" stroke="#666" stroke-width="1.2"/><line x1="138" y1="518.5" x2="147" y2="518.5" stroke="#666" stroke-width="1.2"/><line x1="138" y1="521.5" x2="147" y2="521.5" stroke="#666" stroke-width="1.2"/><rect x="174.5" y="506.5" width="21" height="17" fill="#fff" stroke="#555" stroke-width="1" rx="1.5"/><rect x="177.5" y="509.5" width="3" height="3" fill="#C8C8E8" stroke="#2B9B8E" stroke-width="1.2"/><rect x="183.5" y="509.5" width="3" height="3" fill="#C8C8E8" stroke="#243F94" stroke-width="1.2"/><rect x="189.5" y="509.5" width="3" height="3" fill="#C8C8E8" stroke="#6A2E7E" stroke-width="1.2"/><rect x="177.5" y="515.5" width="3" height="3" fill="#C8C8E8" stroke="#2436A8" stroke-width="1.2"/><rect x="183.5" y="515.5" width="3" height="3" fill="#C8C8E8" stroke="#6B5230" stroke-width="1.2"/><rect x="213.5" y="509.5" width="21" height="11" fill="#E9E9E9" stroke="#555" stroke-width="1" rx="1.5"/><rect x="214.5" y="510.5" width="19" height="9" fill="none" stroke="#fff" stroke-width="1"/><line x1="220.5" y1="509.5" x2="220.5" y2="520.5" stroke="#555" stroke-width="1"/><rect x="216.5" y="512.5" width="1.5" height="1.5" fill="#444"/><rect x="216.5" y="514.5" width="1.5" height="1.5" fill="#444"/><rect x="216.5" y="516.5" width="1.5" height="1.5" fill="#444"/><line x1="58" y1="539.5" x2="78" y2="539.5" stroke="#555" stroke-width="1"/><path d="M99.5,540 V539.5 Q99.5,538.5 100.5,538.5 H113.5 Q114.5,538.5 114.5,539.5 V540" fill="#fff" stroke="#555" stroke-width="1"/><rect x="184" y="538" width="1" height="2" fill="#333"/></svg><!--/PALETTE-->
<!--TOOLBAR--><svg class="a" style="left:0;top:0" width="730" height="569" viewBox="0 0 730 569"><defs><linearGradient id="pgn" x1="0" y1="0" x2="1" y2="1"><stop offset="0" stop-color="#fff"/><stop offset="1" stop-color="#D5D5D3"/></linearGradient><radialGradient id="glw" cx="0.5" cy="0.5" r="0.5"><stop offset="0.55" stop-color="#FFF000" stop-opacity="0.85"/><stop offset="1" stop-color="#FFF000" stop-opacity="0"/></radialGradient><linearGradient id="fold" x1="0" y1="0" x2="0" y2="1"><stop offset="0" stop-color="#B8BAA6"/><stop offset="1" stop-color="#8E907C"/></linearGradient><linearGradient id="foldb" x1="0" y1="0" x2="1" y2="0"><stop offset="0" stop-color="#7D7F6C"/><stop offset="1" stop-color="#9A9C88"/></linearGradient><linearGradient id="tsep" x1="0" y1="0" x2="0" y2="1"><stop offset="0" stop-color="#C8BEAE" stop-opacity="0"/><stop offset="0.2" stop-color="#C8BEAE"/><stop offset="0.8" stop-color="#C8BEAE"/><stop offset="1" stop-color="#C8BEAE" stop-opacity="0"/></linearGradient></defs><path d="M10,54h1v1h-1z M10,81h1v1h-1z M12,54h1v1h-1z M12,81h1v1h-1z M14,54h1v1h-1z M14,81h1v1h-1z M16,54h1v1h-1z M16,81h1v1h-1z M18,54h1v1h-1z M18,81h1v1h-1z M20,54h1v1h-1z M20,81h1v1h-1z M22,54h1v1h-1z M22,81h1v1h-1z M24,54h1v1h-1z M24,81h1v1h-1z M26,54h1v1h-1z M26,81h1v1h-1z M28,54h1v1h-1z M28,81h1v1h-1z M30,54h1v1h-1z M30,81h1v1h-1z M32,54h1v1h-1z M32,81h1v1h-1z M34,54h1v1h-1z M34,81h1v1h-1z M36,54h1v1h-1z M36,81h1v1h-1z M10,56h1v1h-1z M37,56h1v1h-1z M10,58h1v1h-1z M37,58h1v1h-1z M10,60h1v1h-1z M37,60h1v1h-1z M10,62h1v1h-1z M37,62h1v1h-1z M10,64h1v1h-1z M37,64h1v1h-1z M10,66h1v1h-1z M37,66h1v1h-1z M10,68h1v1h-1z M37,68h1v1h-1z M10,70h1v1h-1z M37,70h1v1h-1z M10,72h1v1h-1z M37,72h1v1h-1z M10,74h1v1h-1z M37,74h1v1h-1z M10,76h1v1h-1z M37,76h1v1h-1z M10,78h1v1h-1z M37,78h1v1h-1z M10,80h1v1h-1z M37,80h1v1h-1z" fill="#333"/><rect x="14.5" y="58.5" width="17" height="19" rx="1" fill="url(#pgn)" stroke="#8A8A88"/><circle cx="27" cy="64.5" r="8.5" fill="url(#glw)"/><polygon points="27.00,58.80 28.82,62.49 32.90,63.08 29.95,65.96 30.64,70.02 27.00,68.10 23.36,70.02 24.05,65.96 21.10,63.08 25.18,62.49" fill="#fff" stroke="#F2D700" stroke-width="1.3" stroke-linejoin="round"/><path d="M49.5,76.5 V59.5 Q49.5,58.5 50.5,58.5 H57 L58.5,60.5 H68.5 Q69.5,60.5 69.5,61.5 V71 H49.5" fill="url(#foldb)" stroke="#4E5048"/><rect x="55" y="62" width="11" height="8" fill="#fff" stroke="#C0C0BA" stroke-width="0.6"/><rect x="57" y="64" width="8" height="1" fill="#B9B9B5"/><rect x="57" y="66" width="8" height="1" fill="#B9B9B5"/><path d="M48.8,69.5 H70.5 L69.6,76.3 Q69.4,77.5 68.3,77.5 H50.5 Q49.5,77.5 49.4,76.5 Z" fill="url(#fold)" stroke="#4E5048"/><rect x="85.5" y="57.5" width="20" height="20" rx="1.2" fill="#729FCF" stroke="#2F5A9C"/><rect x="86.5" y="58.5" width="18" height="18" fill="none" stroke="#A7C4E6" stroke-width="0.8"/><rect x="88" y="57.5" width="15" height="2" fill="#E9780A"/><rect x="88" y="59.5" width="15" height="8.5" fill="#fff"/><rect x="89" y="61.5" width="13" height="0.8" fill="#C9CEC6"/><rect x="89" y="64.5" width="13" height="0.8" fill="#C9CEC6"/><rect x="88.5" y="70.5" width="11" height="7" fill="#DADAD6" stroke="#4F4F4F"/><rect x="91" y="72" width="2.5" height="4" fill="#3465A4" stroke="#333" stroke-width="0.8"/><rect x="95" y="72" width="3" height="4.5" fill="#C0C0BC"/><rect x="119" y="57" width="1" height="21" fill="url(#tsep)"/><rect x="120" y="57" width="1" height="21" fill="#fff" opacity="0.9"/><rect x="203" y="57" width="1" height="21" fill="url(#tsep)"/><rect x="204" y="57" width="1" height="21" fill="#fff" opacity="0.9"/><rect x="323" y="57" width="1" height="21" fill="url(#tsep)"/><rect x="324" y="57" width="1" height="21" fill="#fff" opacity="0.9"/><path d="M137.5,65 L145.5,57.8 V62.2 Q152.8,62.5 152.8,69.5 Q152.8,73.5 149.5,75.5 Q150,73 149.8,71.5 Q149.5,68.5 145.5,68.5 V72.3 Z" fill="#E2DED6" stroke="#D0CCC2" stroke-width="1"/><ellipse cx="145" cy="76" rx="7" ry="1.3" fill="#D8D4CC" opacity="0.6"/><path d="M185.5,65 L177.5,57.8 V62.2 Q170.2,62.5 170.2,69.5 Q170.2,73.5 173.5,75.5 Q173,73 173.2,71.5 Q173.5,68.5 177.5,68.5 V72.3 Z" fill="#E2DED6" stroke="#D0CCC2" stroke-width="1"/><ellipse cx="178" cy="76" rx="7" ry="1.3" fill="#D8D4CC" opacity="0.6"/><path d="M222,58.2 Q220.8,62.5 223.5,66.5 L227,71.2 L228.2,69.5 Q224.8,63.5 222,58.2 Z" fill="#F2F2F0" stroke="#B4B4B0" stroke-width="0.9"/><path d="M233,58.2 Q234.2,62.5 231.5,66.5 L228,71.2 L226.8,69.5 Q230.2,63.5 233,58.2 Z" fill="#F2F2F0" stroke="#B4B4B0" stroke-width="0.9"/><circle cx="223.2" cy="74.6" r="2.7" fill="#EDE9E3" stroke="#999995" stroke-width="1.4"/><circle cx="231.8" cy="74.6" r="2.7" fill="#EDE9E3" stroke="#999995" stroke-width="1.4"/><path d="M225.8,72.6 H229.2" stroke="#999995" stroke-width="1.3"/><rect x="255.5" y="58.5" width="12" height="12" fill="#F1F0EC" stroke="#C8C5BE"/><rect x="258" y="61" width="8" height="0.9" fill="#D2CFC8"/><rect x="258" y="63" width="8" height="0.9" fill="#D2CFC8"/><rect x="258" y="65" width="8" height="0.9" fill="#D2CFC8"/><rect x="258" y="67" width="5" height="0.9" fill="#D2CFC8"/><rect x="261.5" y="65.5" width="12" height="12" fill="#F1F0EC" stroke="#C8C5BE"/><rect x="264" y="68" width="8" height="0.9" fill="#D2CFC8"/><rect x="264" y="70" width="8" height="0.9" fill="#D2CFC8"/><rect x="264" y="72" width="8" height="0.9" fill="#D2CFC8"/><rect x="264" y="74" width="5" height="0.9" fill="#D2CFC8"/><rect x="292.5" y="59.5" width="13.5" height="16" rx="1.2" fill="#DFDCD5" stroke="#C3BFB6"/><rect x="295.5" y="58" width="7" height="3.2" rx="1" fill="#E8E6E0" stroke="#BDB9B0" stroke-width="0.9"/><rect x="297.5" y="65.5" width="12" height="12" fill="#F1F0EC" stroke="#C8C5BE"/><rect x="300" y="68" width="8" height="0.9" fill="#D2CFC8"/><rect x="300" y="70" width="8" height="0.9" fill="#D2CFC8"/><rect x="300" y="72" width="8" height="0.9" fill="#D2CFC8"/><rect x="300" y="74" width="5" height="0.9" fill="#D2CFC8"/><rect x="331.5" y="51.5" width="33" height="33" rx="3" fill="#D9D2C7" stroke="#9A8F7E"/><path d="M344.5,60.5 V76 L348.2,72.6 L351,78.2 L353.4,77.1 L350.8,71.6 H356 Z" fill="#fff" stroke="#333" stroke-width="1" stroke-linejoin="round"/></svg><!--/TOOLBAR-->
<!--MISC--><svg class="a" style="left:0;top:0" width="730" height="569" viewBox="0 0 730 569"><rect x="6.5" y="5.5" width="14" height="13" fill="#fff" stroke="#8a8a80"/><path d="M8.5,8.5 H18.5 M8.5,8.5 V15.5 H16.5 V10.5 H8.5" fill="none" stroke="#3a3a3a" stroke-width="1.2"/><path d="M17,7 L19,8.5 L17,10" fill="none" stroke="#3a3a3a" stroke-width="1"/><rect x="10" y="12" width="4" height="2" fill="#777"/><path d="M22,7.8 V19.5 H10.2 Z" fill="#E5C01E" stroke="#C49A00" stroke-width="0.8"/><path d="M13,18.5 h1 M15,18.5 h1 M17,18.5 h1 M19,18.5 h1 M21,18.5 h0.8" stroke="#FFF3A0" stroke-width="1"/><path d="M269,292h1v1h-1z M272,292h1v1h-1z M269,295h1v1h-1z M272,295h1v1h-1z M269,298h1v1h-1z M272,298h1v1h-1z M269,301h1v1h-1z M272,301h1v1h-1z M269,304h1v1h-1z M272,304h1v1h-1z M269,307h1v1h-1z M272,307h1v1h-1z M269,310h1v1h-1z M272,310h1v1h-1z M269,313h1v1h-1z M272,313h1v1h-1z M269,316h1v1h-1z M272,316h1v1h-1z M269,319h1v1h-1z M272,319h1v1h-1z M269,322h1v1h-1z M272,322h1v1h-1z M269,325h1v1h-1z M272,325h1v1h-1z M269,328h1v1h-1z M272,328h1v1h-1z M269,331h1v1h-1z M272,331h1v1h-1z M269,334h1v1h-1z M272,334h1v1h-1z M269,337h1v1h-1z M272,337h1v1h-1z M269,340h1v1h-1z M272,340h1v1h-1z" fill="#fff"/><path d="M268,291h1v1h-1z M271,291h1v1h-1z M268,294h1v1h-1z M271,294h1v1h-1z M268,297h1v1h-1z M271,297h1v1h-1z M268,300h1v1h-1z M271,300h1v1h-1z M268,303h1v1h-1z M271,303h1v1h-1z M268,306h1v1h-1z M271,306h1v1h-1z M268,309h1v1h-1z M271,309h1v1h-1z M268,312h1v1h-1z M271,312h1v1h-1z M268,315h1v1h-1z M271,315h1v1h-1z M268,318h1v1h-1z M271,318h1v1h-1z M268,321h1v1h-1z M271,321h1v1h-1z M268,324h1v1h-1z M271,324h1v1h-1z M268,327h1v1h-1z M271,327h1v1h-1z M268,330h1v1h-1z M271,330h1v1h-1z M268,333h1v1h-1z M271,333h1v1h-1z M268,336h1v1h-1z M271,336h1v1h-1z M268,339h1v1h-1z M271,339h1v1h-1z" fill="#A89C88"/><path d="M359,292h1v1h-1z M362,292h1v1h-1z M359,295h1v1h-1z M362,295h1v1h-1z M359,298h1v1h-1z M362,298h1v1h-1z M359,301h1v1h-1z M362,301h1v1h-1z M359,304h1v1h-1z M362,304h1v1h-1z M359,307h1v1h-1z M362,307h1v1h-1z M359,310h1v1h-1z M362,310h1v1h-1z M359,313h1v1h-1z M362,313h1v1h-1z M359,316h1v1h-1z M362,316h1v1h-1z M359,319h1v1h-1z M362,319h1v1h-1z M359,322h1v1h-1z M362,322h1v1h-1z M359,325h1v1h-1z M362,325h1v1h-1z M359,328h1v1h-1z M362,328h1v1h-1z M359,331h1v1h-1z M362,331h1v1h-1z M359,334h1v1h-1z M362,334h1v1h-1z M359,337h1v1h-1z M362,337h1v1h-1z M359,340h1v1h-1z M362,340h1v1h-1z" fill="#fff"/><path d="M358,291h1v1h-1z M361,291h1v1h-1z M358,294h1v1h-1z M361,294h1v1h-1z M358,297h1v1h-1z M361,297h1v1h-1z M358,300h1v1h-1z M361,300h1v1h-1z M358,303h1v1h-1z M361,303h1v1h-1z M358,306h1v1h-1z M361,306h1v1h-1z M358,309h1v1h-1z M361,309h1v1h-1z M358,312h1v1h-1z M361,312h1v1h-1z M358,315h1v1h-1z M361,315h1v1h-1z M358,318h1v1h-1z M361,318h1v1h-1z M358,321h1v1h-1z M361,321h1v1h-1z M358,324h1v1h-1z M361,324h1v1h-1z M358,327h1v1h-1z M361,327h1v1h-1z M358,330h1v1h-1z M361,330h1v1h-1z M358,333h1v1h-1z M361,333h1v1h-1z M358,336h1v1h-1z M361,336h1v1h-1z M358,339h1v1h-1z M361,339h1v1h-1z" fill="#A89C88"/><path d="M521,241h1v1h-1z M521,244h1v1h-1z M524,241h1v1h-1z M524,244h1v1h-1z M527,241h1v1h-1z M527,244h1v1h-1z M530,241h1v1h-1z M530,244h1v1h-1z M533,241h1v1h-1z M533,244h1v1h-1z M536,241h1v1h-1z M536,244h1v1h-1z M539,241h1v1h-1z M539,244h1v1h-1z M542,241h1v1h-1z M542,244h1v1h-1z M545,241h1v1h-1z M545,244h1v1h-1z M548,241h1v1h-1z M548,244h1v1h-1z M551,241h1v1h-1z M551,244h1v1h-1z M554,241h1v1h-1z M554,244h1v1h-1z M557,241h1v1h-1z M557,244h1v1h-1z M560,241h1v1h-1z M560,244h1v1h-1z M563,241h1v1h-1z M563,244h1v1h-1z M566,241h1v1h-1z M566,244h1v1h-1z" fill="#fff"/><path d="M520,240h1v1h-1z M520,243h1v1h-1z M523,240h1v1h-1z M523,243h1v1h-1z M526,240h1v1h-1z M526,243h1v1h-1z M529,240h1v1h-1z M529,243h1v1h-1z M532,240h1v1h-1z M532,243h1v1h-1z M535,240h1v1h-1z M535,243h1v1h-1z M538,240h1v1h-1z M538,243h1v1h-1z M541,240h1v1h-1z M541,243h1v1h-1z M544,240h1v1h-1z M544,243h1v1h-1z M547,240h1v1h-1z M547,243h1v1h-1z M550,240h1v1h-1z M550,243h1v1h-1z M553,240h1v1h-1z M553,243h1v1h-1z M556,240h1v1h-1z M556,243h1v1h-1z M559,240h1v1h-1z M559,243h1v1h-1z M562,240h1v1h-1z M562,243h1v1h-1z M565,240h1v1h-1z M565,243h1v1h-1z" fill="#A89C88"/><path d="M725,553h1v1h-1z M722,556h1v1h-1z M725,556h1v1h-1z M719,559h1v1h-1z M722,559h1v1h-1z M725,559h1v1h-1z M716,562h1v1h-1z M719,562h1v1h-1z M722,562h1v1h-1z M725,562h1v1h-1z" fill="#fff"/><path d="M724,552h1v1h-1z M721,555h1v1h-1z M724,555h1v1h-1z M718,558h1v1h-1z M721,558h1v1h-1z M724,558h1v1h-1z M715,561h1v1h-1z M718,561h1v1h-1z M721,561h1v1h-1z M724,561h1v1h-1z" fill="#A89C88"/><rect x="642.5" y="279.5" width="19" height="19" fill="#fff" stroke="#A0A0A0"/><circle cx="649.7" cy="281.4" r="1.9" fill="#0000DD"/><path d="M649.7,284 V290.2 H655 L657.8,294.3 L660.3,292.6" fill="none" stroke="#0000DD" stroke-width="2.4" stroke-linejoin="miter"/><path d="M650,287.2 H654.6" fill="none" stroke="#0000DD" stroke-width="1.5"/><path d="M647,288 A5.3,5.3 0 1 0 656,294" fill="none" stroke="#0000DD" stroke-width="1.6"/><path d="M661.5,516.5 Q661.5,515.5 662.5,515.5 H675.5 V530.5 H663 Q661.5,530.5 661.5,532 Z" fill="#C8C2BF"/><path d="M661.5,531.5 Q661.5,533 663,533 H677 V530.5" fill="#F3F1EE" stroke="#C8C2BF" stroke-width="1"/><path d="M676,518 L678.2,520 V530 L676,531" fill="#D9D4D0" stroke="#C8C2BF" stroke-width="0.8"/><path d="M666.5,518.5 H669.5 Q673.5,518.5 673.5,523 Q673.5,527.5 669.5,527.5 H666.5 Z M668.5,520.3 V525.7 H669.5 Q671.3,525.7 671.3,523 Q671.3,520.3 669.5,520.3 Z" fill="#ECE9E6" fill-rule="evenodd"/><path d="M699.5,518 L706.5,528" stroke="#BDBDBA" stroke-width="2.6" stroke-linecap="round"/><path d="M699.5,518 L706.5,528" stroke="#EFEFEE" stroke-width="1.2" stroke-linecap="round"/><path d="M703.5,527.5 L709,522.5 L716,530 Q711,534 707,532.5 Q704,531 703.5,527.5 Z" fill="#E8E8E6" stroke="#B8B8B5" stroke-width="1"/><path d="M707,530 L711.5,526 M709.5,531.5 L713.5,528" stroke="#C8C8C5" stroke-width="0.8"/><path d="M714,523 h1 M712.5,525 h1 M715,526 h1" stroke="#C0C0BC" stroke-width="1"/></svg><!--/MISC-->
</body></html>
